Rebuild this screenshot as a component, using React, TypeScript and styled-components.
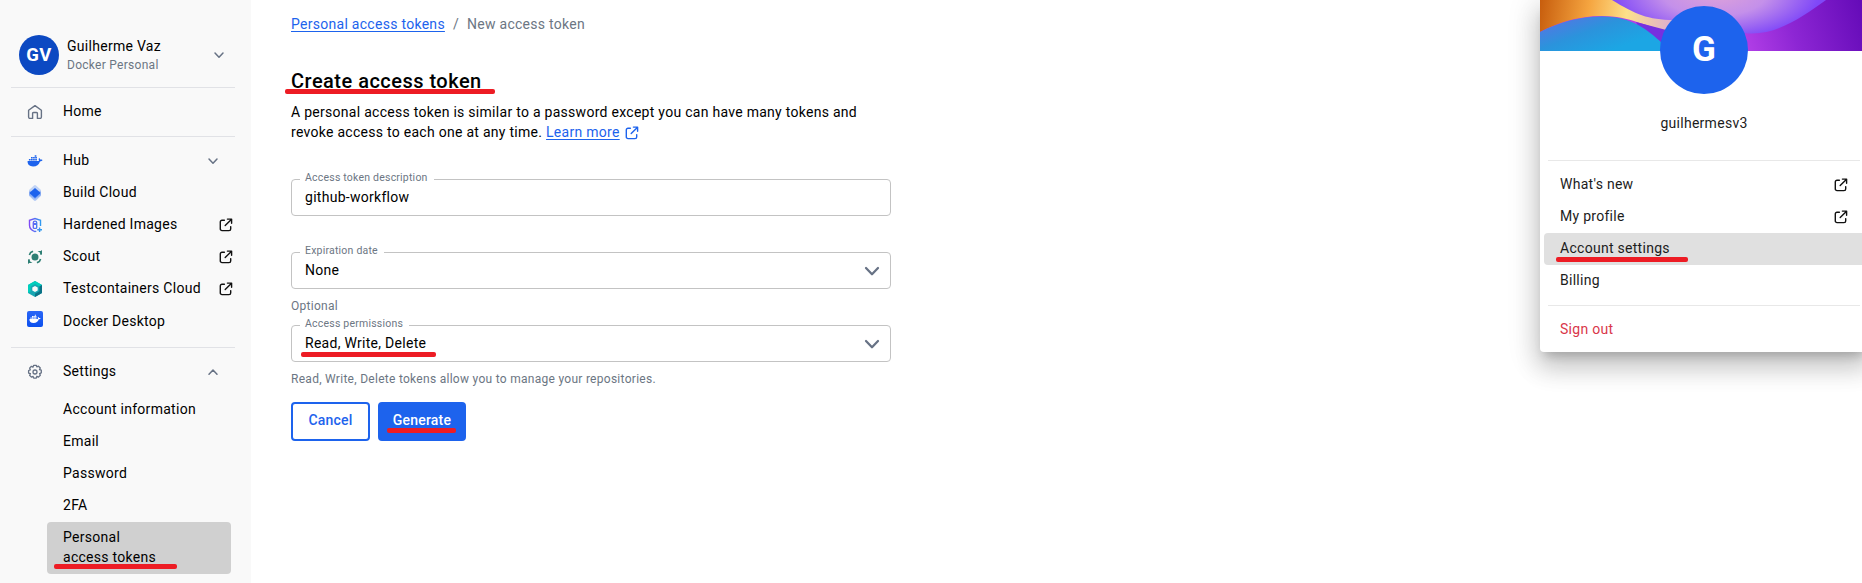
import React from "react";
import styled, { createGlobalStyle } from "styled-components";

const GlobalStyle = createGlobalStyle`
  * { box-sizing: border-box; }
  body {
    margin: 0;
    background: #fff;
    color: #000;
    font-family: Roboto, "Liberation Sans", sans-serif;
    font-size: 14px;
    line-height: 20px;
    letter-spacing: 0.28px;
  }
`;

const Page = styled.div`
  position: relative;
  display: flex;
  height: 583px;
  overflow: hidden;
`;

/* Sidebar */

const Sidebar = styled.nav`
  width: 251px;
  flex: none;
  padding: 23px 16px 0 11px;
  background: #f9f9f9;
`;

const Account = styled.div`
  display: flex;
  align-items: center;
  height: 64px;
  padding: 0 8px;
`;

const Avatar = styled.div<{ $size: number; $color: string; $font: number }>`
  display: flex;
  align-items: center;
  justify-content: center;
  flex: none;
  width: ${(p) => p.$size}px;
  height: ${(p) => p.$size}px;
  border-radius: 50%;
  background: ${(p) => p.$color};
  color: #fff;
  font-size: ${(p) => p.$font}px;
  font-weight: 700;
`;

const AccountText = styled.div`
  flex: 1;
  margin-left: 8px;
  padding-top: 2px;
`;

const AccountName = styled.div`
  line-height: 19px;
`;

const AccountPlan = styled.div`
  font-size: 12px;
  line-height: 19px;
  color: #6c7683;
`;

const NavGroup = styled.div<{ $pad: string }>`
  border-top: 1px solid #e1e2e6;
  padding: ${(p) => p.$pad};
`;

const NavItem = styled.div`
  display: flex;
  align-items: center;
  height: 32px;
  padding-left: 16px;
`;

const NavIcon = styled.span`
  display: flex;
  justify-content: center;
  width: 16px;
  margin-right: 20px;
`;

const NavLabel = styled.span<{ $lift?: number }>`
  flex: 1;
  padding-bottom: ${(p) => p.$lift ?? 2}px;
  white-space: nowrap;
`;

const Trailing = styled.span<{ $right: number }>`
  display: flex;
  margin-right: ${(p) => p.$right}px;
`;

const SubList = styled.div`
  margin: 5px 4px 0 36px;
`;

const SubItem = styled.div<{ $active?: boolean }>`
  width: 184px;
  margin-top: ${(p) => (p.$active ? 1 : 0)}px;
  padding: ${(p) => (p.$active ? "5px 16px 7px" : "6px 16px")};
  border-radius: 4px;
  background: ${(p) => (p.$active ? "#d0d0d0" : "transparent")};
`;

/* Hand-drawn highlight beneath a label */

const Marked = styled.span`
  position: relative;
  display: inline-block;
`;

const Stroke = styled.i<{ $left: number; $top: number; $width: number }>`
  position: absolute;
  left: ${(p) => p.$left}px;
  top: ${(p) => p.$top}px;
  width: ${(p) => p.$width}px;
  height: 5px;
  border-radius: 2px;
  background: #ed1c24;
`;

/* Main column */

const Main = styled.main`
  flex: 1;
  padding: 14px 0 0 40px;
`;

const Breadcrumb = styled.div`
  display: flex;
  gap: 8px;
  color: #6c7683;
`;

const Link = styled.a`
  color: #1d63ed;
  text-decoration: underline;
  text-underline-offset: 2px;
`;

const Heading = styled.h1`
  margin: 33px 0 7px;
  font-size: 20px;
  line-height: 28px;
  font-weight: 500;
  letter-spacing: 0.48px;
`;

const Intro = styled.p`
  width: 600px;
  margin: 0;
`;

const InlineIcon = styled.span`
  display: inline-flex;
  margin-left: 5px;
  vertical-align: -3px;
`;

const Field = styled.fieldset<{ $top: number }>`
  position: relative;
  display: flex;
  align-items: center;
  justify-content: space-between;
  width: 600px;
  height: 37px;
  margin: ${(p) => p.$top}px 0 0;
  padding: 0 6px 0 13px;
  border: 1px solid #c3c3c3;
  border-radius: 4px;
`;

const FieldLabel = styled.span`
  position: absolute;
  top: -10px;
  left: 8px;
  padding: 0 6px 0 5px;
  background: #fff;
  color: #6c7683;
  font-size: 10.5px;
  line-height: 16px;
  letter-spacing: 0.21px;
`;

const FieldValue = styled.span`
  padding-bottom: 2px;
`;

const Helper = styled.div<{ $top: number }>`
  margin-top: ${(p) => p.$top}px;
  font-size: 12px;
  line-height: 16px;
  color: #6c7683;
`;

const Actions = styled.div`
  display: flex;
  gap: 8px;
  margin-top: 15px;
`;

const Button = styled.button<{ $primary?: boolean }>`
  width: ${(p) => (p.$primary ? 88 : 79)}px;
  height: 39px;
  padding: 0 0 3px;
  border: 2px solid #1d63ed;
  border-radius: 4px;
  background: ${(p) => (p.$primary ? "#1d63ed" : "#fff")};
  color: ${(p) => (p.$primary ? "#fff" : "#1d63ed")};
  font: 500 14px/20px Roboto, "Liberation Sans", sans-serif;
  letter-spacing: 0.2px;
`;

/* Profile menu */

const Menu = styled.aside`
  position: absolute;
  top: 0;
  right: -6px;
  width: 328px;
  height: 352px;
  background: #fff;
  border-radius: 0 0 4px 4px;
  box-shadow: 0 8px 10px -5px rgba(0, 0, 0, 0.2), 0 16px 24px 2px rgba(0, 0, 0, 0.14),
    0 6px 30px 5px rgba(0, 0, 0, 0.12);
  color: #1c1c1c;
`;

const Banner = styled.svg`
  display: block;
  width: 328px;
  height: 51px;
`;

const Profile = styled.div`
  position: relative;
  display: flex;
  flex-direction: column;
  align-items: center;
  height: 154px;
  margin-top: -45px;
`;

const ProfileName = styled.div`
  margin-top: 19px;
`;

const MenuGroup = styled.div`
  margin-left: 4px;
  padding: 8px 0;
`;

const MenuRule = styled.hr`
  margin: 0 8px;
  border: 0;
  border-top: 1px solid #e8e8e8;
`;

const MenuItem = styled.div<{ $active?: boolean; $danger?: boolean }>`
  display: flex;
  align-items: center;
  justify-content: space-between;
  height: 32px;
  padding: 0 20px 0 16px;
  border-radius: 4px;
  background: ${(p) => (p.$active ? "#e0e0e0" : "transparent")};
  color: ${(p) => (p.$danger ? "#d9364a" : "inherit")};
`;

const MenuLabel = styled.span`
  padding-bottom: 2px;
`;

const Chevron = ({ size = 16, up = false, width = 1.5 }: { size?: number; up?: boolean; width?: number }) => (
  <svg width={size} height={size} viewBox="0 0 16 16" fill="none" stroke="#677285" strokeWidth={width} strokeLinecap="round" strokeLinejoin="round">
    <path d={up ? "M4 10.2 8 6l4 4.2" : "M4 6l4 4.2L12 6"} />
  </svg>
);

const External = ({ color = "#111" }: { color?: string }) => (
  <svg width="14" height="14" viewBox="0 0 14 14" fill="none" stroke={color} strokeWidth="1.4" strokeLinecap="round" strokeLinejoin="round">
    <path d="M5.4 2.2H3A1.7 1.7 0 0 0 1.3 3.9v7A1.7 1.7 0 0 0 3 12.6h7a1.7 1.7 0 0 0 1.7-1.7V8.6M8.4 1.1h4.2v4.2M12.3 1.4 6.2 7.6" />
  </svg>
);

const HomeIcon = () => (
  <svg width="16" height="16" viewBox="0 0 16 16" fill="none" stroke="#677285" strokeWidth="1.4" strokeLinejoin="round">
    <path d="M1.6 6.3 8 1.6l6.4 4.7v6.6a1.4 1.4 0 0 1-1.4 1.5h-2.6V9.6a1 1 0 0 0-1-1.100H6.600a1 1 0 0 0-1 1.100v4.800H3a1.400 1.400 0 0 1-1.400-1.500z" />
  </svg>
);

const Whale = ({ size = 16, color = "#1d63ed" }: { size?: number; color?: string }) => (
  <svg width={size} height={size} viewBox="0 0 16 16" fill={color}>
    <path d="M.6 8.1h10.2c.7 0 1.1-.3 1.2-.7-.5-.9-.4-1.7.2-2.5.7.5 1 1 1 1.7.8-.1 1.7 0 2.3.4-.4 1-1.3 1.4-2.5 1.4-1.1 3.3-3.3 5-6.9 5C2.500 13.400.3 11.700.6 8.100z" />
    <path d="M1.900 6h1.700v1.500H1.900zM4 6h1.700v1.500H4zM6.100 6h1.700v1.500H6.100zM8.200 6h1.700v1.500H8.200zM4 4.100h1.700v1.500H4zM6.100 4.100h1.700v1.500H6.100zM8.200 4.100h1.700v1.500H8.200zM7.700 2.200h1.700v1.500H7.700z" />
  </svg>
);

const BuildIcon = () => (
  <svg width="16" height="16" viewBox="0 0 16 16" fill="#1d63ed">
    <path opacity=".25" d="M7 .5a1.500 1.500 0 0 1 2 0l5 4.400v5L8 14 2 9.900v-5z" />
    <path opacity=".35" d="M2 6.500h12v4.200L9 15.400a1.500 1.500 0 0 1-2 0l-5-4.700z" />
    <path d="m8 2.900 4.900 4.400a1 1 0 0 1 0 1.400L8 13.100 3.100 8.700a1 1 0 0 1 0-1.400z" />
  </svg>
);

const HardenedIcon = () => (
  <svg width="16" height="16" viewBox="0 0 16 16" fill="none" stroke="url(#shield)" strokeWidth="1.4">
    <defs>
      <linearGradient id="shield" x1="2" y1="0" x2="14" y2="0" gradientUnits="userSpaceOnUse">
        <stop offset="0" stopColor="#8247f5" />
        <stop offset="1" stopColor="#2d9cf0" />
      </linearGradient>
    </defs>
    <path d="M9.300 14.100 8 14.600C4.500 13.300 2.500 11.400 2.500 8.200V3.300L8 1.500l5.500 1.800v5.600M12.600 10.500v4.600M10.200 12.800h4.800" />
    <path d="M6.300 5.800a1.700 1.700 0 0 1 3.400 0v1H6.300zM6.300 7.200h3.400v3.200a1 1 0 0 1-1 1H7.300a1 1 0 0 1-1-1z" />
  </svg>
);

const ScoutIcon = () => (
  <svg width="16" height="16" viewBox="0 0 16 16" fill="#2e7f74">
    <circle cx="8" cy="8" r="3.500" />
    <path d="M10.500 2h3.200L15 1v4.500L13.500 6l-.7-2.500zM5.500 14H2.300L1 15v-4.500L2.500 10l.7 2.500z" />
    <path fill="none" stroke="#2e7f74" strokeWidth="1.700" d="M6 2.200 3.600 3.500 2.400 6M10 13.800l2.400-1.300L13.600 10" />
  </svg>
);

const TestIcon = () => (
  <svg width="16" height="16" viewBox="0 0 16 16">
    <path fill="#17a6b2" d="M8 0l7 4v8l-7 4-7-4V4z" />
    <path fill="#00d0bd" d="M8 0l7 4-2.500 1.600L8 3 3.600 5.600v5L1 12V4z" />
    <path fill="#0b7286" d="M15 4v8l-7 4v-3.200l4.400-2.500V5.600z" />
    <path fill="#f9f9f9" d="m8 5 2.700 1.500v3L8 11 5.300 9.500v-3z" />
  </svg>
);

const Tile = styled.span`
  display: flex;
  align-items: center;
  justify-content: center;
  width: 16px;
  height: 16px;
  margin-top: -4px;
  border-radius: 2px;
  background: linear-gradient(#2a66f6, #0c50ee);
`;

const GearIcon = () => (
  <svg width="16" height="16" viewBox="0 0 16 16" fill="none" stroke="#677285" strokeWidth="1.300" strokeLinejoin="round">
    <path d="M6.700 1.300h2.600l.5 1.600 1.700-.7 1.800 1.800-.8 1.600 1.800.6v2.600l-1.700.8.700 1.700-1.800 1.800-1.600-.8-.6 1.800H6.700l-.6-1.700-1.700.7-1.800-1.800.8-1.600-1.800-.6V6.500l1.700-.7-.7-1.700 1.800-1.800 1.600.8z" />
    <circle cx="8" cy="8" r="2" />
  </svg>
);

const products = [
  { label: "Hub", icon: <Whale />, end: "chevron" },
  { label: "Build Cloud", icon: <BuildIcon />, end: "" },
  { label: "Hardened Images", icon: <HardenedIcon />, end: "external" },
  { label: "Scout", icon: <ScoutIcon />, end: "external" },
  { label: "Testcontainers Cloud", icon: <TestIcon />, end: "external" },
];

export default function App() {
  return (
    <Page>
      <GlobalStyle />
      <Sidebar>
        <Account>
          <Avatar $size={40} $color="#0c49c2" $font={18.5}>GV</Avatar>
          <AccountText>
            <AccountName>Guilherme Vaz</AccountName>
            <AccountPlan>Docker Personal</AccountPlan>
          </AccountText>
          <Chevron />
        </Account>
        <NavGroup $pad="8px 0">
          <NavItem>
            <NavIcon><HomeIcon /></NavIcon>
            <NavLabel>Home</NavLabel>
          </NavItem>
        </NavGroup>
        <NavGroup $pad="8px 0 10px">
          {products.map((p) => (
            <NavItem key={p.label}>
              <NavIcon>{p.icon}</NavIcon>
              <NavLabel>{p.label}</NavLabel>
              {p.end === "chevron" && <Trailing $right={14}><Chevron /></Trailing>}
              {p.end === "external" && <Trailing $right={2}><External /></Trailing>}
            </NavItem>
          ))}
          <NavItem>
            <NavIcon><Tile><Whale size={12} color="#fff" /></Tile></NavIcon>
            <NavLabel $lift={0}>Docker Desktop</NavLabel>
          </NavItem>
        </NavGroup>
        <NavGroup $pad="8px 0">
          <NavItem>
            <NavIcon><GearIcon /></NavIcon>
            <NavLabel>Settings</NavLabel>
            <Trailing $right={14}><Chevron up /></Trailing>
          </NavItem>
          <SubList>
            <SubItem>Account information</SubItem>
            <SubItem>Email</SubItem>
            <SubItem>Password</SubItem>
            <SubItem>2FA</SubItem>
            <SubItem $active>
              <Marked>
                Personal<br />access tokens
                <Stroke $left={-9} $top={37} $width={123} />
              </Marked>
            </SubItem>
          </SubList>
        </NavGroup>
      </Sidebar>

      <Main>
        <Breadcrumb>
          <Link>Personal access tokens</Link>
          <span>/</span>
          <span>New access token</span>
        </Breadcrumb>
        <Heading>
          <Marked>
            Create access token
            <Stroke $left={-6} $top={22} $width={210} />
          </Marked>
        </Heading>
        <Intro>
          A personal access token is similar to a password except you can have many tokens and<br />
          revoke access to each one at any time. <Link>Learn more</Link>
          <InlineIcon><External color="#1d63ed" /></InlineIcon>
        </Intro>
        <Field $top={37}>
          <FieldLabel>Access token description</FieldLabel>
          <FieldValue>github-workflow</FieldValue>
        </Field>
        <Field $top={36}>
          <FieldLabel>Expiration date</FieldLabel>
          <FieldValue>None</FieldValue>
          <Chevron size={24} width={1.5} />
        </Field>
        <Helper $top={9}>Optional</Helper>
        <Field $top={11}>
          <FieldLabel>Access permissions</FieldLabel>
          <FieldValue>
            <Marked>
              Read, Write, Delete
              <Stroke $left={-4} $top={19} $width={135} />
            </Marked>
          </FieldValue>
          <Chevron size={24} width={1.5} />
        </Field>
        <Helper $top={9}>Read, Write, Delete tokens allow you to manage your repositories.</Helper>
        <Actions>
          <Button>Cancel</Button>
          <Button $primary>
            <Marked>
              Generate
              <Stroke $left={-6} $top={18} $width={69} />
            </Marked>
          </Button>
        </Actions>
      </Main>

      <Menu>
        <Banner viewBox="0 0 328 51">
          <defs>
            <linearGradient id="gold" x1="0" y1="0" x2="140" y2="20" gradientUnits="userSpaceOnUse">
              <stop offset="0" stopColor="#c75d0d" />
              <stop offset=".35" stopColor="#f5a540" />
              <stop offset=".62" stopColor="#fde08a" />
              <stop offset="1" stopColor="#d9a6dc" />
            </linearGradient>
            <linearGradient id="sky" x1="40" y1="12" x2="56" y2="56" gradientUnits="userSpaceOnUse">
              <stop offset="0" stopColor="#5079e2" />
              <stop offset=".45" stopColor="#2b93dc" />
              <stop offset="1" stopColor="#1ca6e4" />
            </linearGradient>
            <linearGradient id="violet" x1="200" y1="40" x2="326" y2="0" gradientUnits="userSpaceOnUse">
              <stop offset="0" stopColor="#b440e8" />
              <stop offset=".4" stopColor="#8d26d4" />
              <stop offset="1" stopColor="#6209b6" />
            </linearGradient>
            <radialGradient id="lilac" cx="175" cy="-8" r="105" gradientTransform="matrix(1 0 0 .45 0 -4)" gradientUnits="userSpaceOnUse">
              <stop offset="0" stopColor="#dfa3d8" />
              <stop offset=".5" stopColor="#c490ea" />
              <stop offset="1" stopColor="#7f48f8" />
            </radialGradient>
          </defs>
          <rect width="328" height="51" fill="url(#violet)" />
          <path d="M0 0H140V34C105 27 90 16 62 16 36 16 15 24 0 32z" fill="url(#gold)" />
          <path d="M96 22 130 31V51H110z" fill="#7630df" />
          <path d="M0 32C22 21 43 16 64 16.500 92 17 108 30 122 43V51H0z" fill="url(#sky)" />
          <path d="M72 0C95 14 108 20 134 20L204 33C235 37 262 17 286 0z" fill="url(#lilac)" />
        </Banner>
        <Profile>
          <Avatar $size={88} $color="#1d63ed" $font={35}>G</Avatar>
          <ProfileName>guilhermesv3</ProfileName>
        </Profile>
        <MenuRule />
        <MenuGroup>
          <MenuItem><MenuLabel>What's new</MenuLabel><External /></MenuItem>
          <MenuItem><MenuLabel>My profile</MenuLabel><External /></MenuItem>
          <MenuItem $active>
            <MenuLabel>
              <Marked>
                Account settings
                <Stroke $left={-4} $top={19} $width={132} />
              </Marked>
            </MenuLabel>
          </MenuItem>
          <MenuItem><MenuLabel>Billing</MenuLabel></MenuItem>
        </MenuGroup>
        <MenuRule />
        <MenuGroup>
          <MenuItem $danger><MenuLabel>Sign out</MenuLabel></MenuItem>
        </MenuGroup>
      </Menu>
    </Page>
  );
}
